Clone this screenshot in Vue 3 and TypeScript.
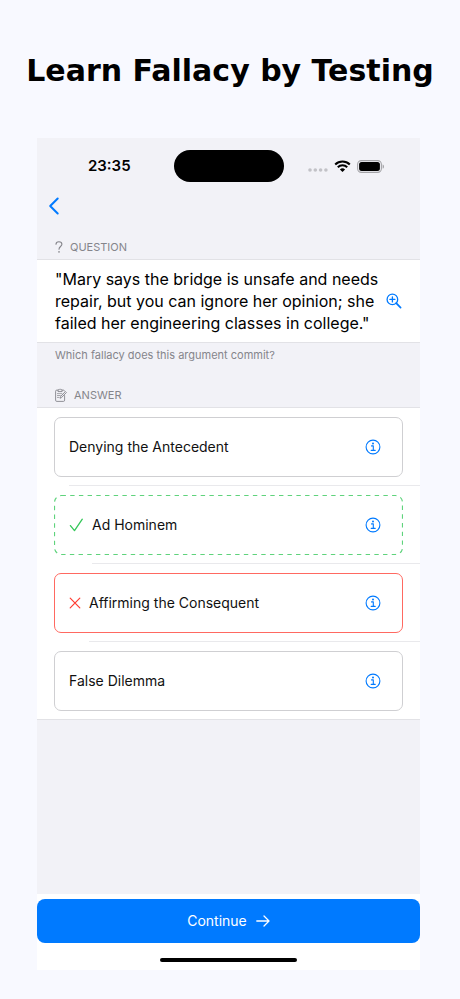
<script setup lang="ts">
import { ref } from 'vue'

type Verdict = 'none' | 'correct' | 'wrong'

interface Answer {
  label: string
  verdict: Verdict
}

const question =
  '"Mary says the bridge is unsafe and needs repair, but you can ignore her opinion; she failed her engineering classes in college."'

const answers = ref<Answer[]>([
  { label: 'Denying the Antecedent', verdict: 'none' },
  { label: 'Ad Hominem', verdict: 'correct' },
  { label: 'Affirming the Consequent', verdict: 'wrong' },
  { label: 'False Dilemma', verdict: 'none' },
])
</script>

<template>
  <main class="page">
    <h1 class="headline">Learn Fallacy by Testing</h1>

    <div class="phone">
      <header class="status">
        <time class="clock">23:35</time>
        <div class="island"></div>
        <div class="indicators">
          <svg class="dots" viewBox="0 0 20 4" aria-hidden="true">
            <circle cx="2" cy="2" r="1.8" />
            <circle cx="7.3" cy="2" r="1.8" />
            <circle cx="12.6" cy="2" r="1.8" />
            <circle cx="17.9" cy="2" r="1.8" />
          </svg>
          <svg class="wifi" viewBox="0 0 17 12" aria-hidden="true">
            <path d="M1.2 4.4a10.6 10.6 0 0 1 14.6 0M3.8 7.2a6.8 6.8 0 0 1 9.4 0" fill="none" stroke="#000" stroke-width="2.1" />
            <path d="M5.9 9.4a3.8 3.8 0 0 1 5.2 0L8.5 12z" />
          </svg>
          <svg class="battery" viewBox="0 0 28 13" aria-hidden="true">
            <rect x="0.6" y="0.6" width="23.8" height="11.8" rx="3.8" fill="none" stroke="#a4a4a8" stroke-width="1.1" />
            <rect x="2.1" y="2.1" width="20.8" height="8.8" rx="2.5" />
            <path d="M25.6 4.4c1.9.5 1.9 3.7 0 4.2z" fill="#a4a4a8" />
          </svg>
        </div>
      </header>

      <nav class="nav">
        <button class="icon-button" type="button" aria-label="Back">
          <svg class="back" viewBox="0 0 12 18" aria-hidden="true">
            <path d="M9.7 1.5 2.2 9l7.5 7.5" />
          </svg>
        </button>
      </nav>

      <section>
        <h2 class="section-title">
          <svg class="mark" viewBox="0 0 8 12" aria-hidden="true">
            <path d="M1 3.3C1 1.7 2.2.8 3.9.8s3 1 3 2.5c0 2.2-2.9 2.3-2.9 4.9" />
            <circle cx="4" cy="10.9" r="0.8" />
          </svg>
          <span>QUESTION</span>
        </h2>
        <div class="question">
          <p class="question-text">{{ question }}</p>
          <button class="icon-button" type="button" aria-label="Zoom in">
            <svg class="zoom" viewBox="0 0 16 16" aria-hidden="true">
              <circle cx="6.4" cy="6.4" r="5.3" />
              <path d="M10.2 10.2 14.6 14.6" stroke-width="1.7" />
              <path d="M6.4 3.9v5M3.9 6.4h5" />
            </svg>
          </button>
        </div>
        <p class="hint">Which fallacy does this argument commit?</p>
      </section>

      <section class="answer-section">
        <h2 class="section-title">
          <svg class="clipboard" viewBox="0 0 12 14" aria-hidden="true">
            <path d="M2.9 2.1H1.8A1.2 1.2 0 0 0 .6 3.3v8.9a1.2 1.2 0 0 0 1.2 1.2h6.6a1.2 1.2 0 0 0 1.2-1.2V7.6M7.3 2.1h1.1q.9 0 1.1.8" />
            <path d="M3 3.2V2.1q0-.4.4-.4h.8a.9.9 0 0 1 1.7 0h.8q.4 0 .4.4v1.1z" />
            <path d="M2.4 5.6h4.4M2.4 7.5h2.9M2.4 9.4h1.7" stroke-width="0.7" />
            <path d="m5.2 9.9.5-1.5 4.7-4.9 1 1-4.7 4.9z" />
          </svg>
          <span>ANSWER</span>
        </h2>
        <ul class="answers">
          <li v-for="answer in answers" :key="answer.label" class="row" :class="answer.verdict">
            <div class="card">
              <svg v-if="answer.verdict === 'correct'" class="outline" aria-hidden="true">
                <rect x="0.5" y="0.5" rx="7" />
              </svg>
              <svg v-if="answer.verdict === 'correct'" class="tick" viewBox="0 0 15 14" aria-hidden="true">
                <path d="m1.4 7.6 4.1 5L13.3 1.2" />
              </svg>
              <svg v-if="answer.verdict === 'wrong'" class="cross" viewBox="0 0 12 12" aria-hidden="true">
                <path d="m1.2 1.2 9.6 9.6M10.8 1.2 1.2 10.8" />
              </svg>
              <button class="choice" type="button">{{ answer.label }}</button>
              <button class="icon-button" type="button" :aria-label="'About ' + answer.label">
                <svg class="info" viewBox="0 0 16 16" aria-hidden="true">
                  <circle cx="8" cy="8" r="6.9" />
                  <path d="M6.5 6.9h1.8v4.3M6.2 11.4h4" />
                  <circle class="dot" cx="8" cy="4.5" r="1" />
                </svg>
              </button>
            </div>
          </li>
        </ul>
      </section>

      <footer class="bottom">
        <button class="continue" type="button">
          <span>Continue</span>
          <svg class="arrow" viewBox="0 0 14 12" aria-hidden="true">
            <path d="M.8 6h12M8 1l5 5-5 5" />
          </svg>
        </button>
        <div class="home-bar"></div>
      </footer>
    </div>
  </main>
</template>

<style>
body {
  margin: 0;
  background: #f8f9ff;
}
</style>

<style scoped>
.page {
  box-sizing: border-box;
  min-height: 100vh;
  padding: 47px 40px 29px 37px;
  display: flex;
  flex-direction: column;
  background: #f8f9ff;
  color: #000;
  font-family: Inter, "Liberation Sans", sans-serif;
}

.headline {
  margin: 0 -40px 43px -37px;
  font: 700 30px/48px "DejaVu Sans", sans-serif;
  text-align: center;
  white-space: nowrap;
}

.phone {
  flex: 1;
  display: flex;
  flex-direction: column;
  background: #f2f2f7;
}

.status {
  display: grid;
  grid-template-columns: 1fr 110px 1fr;
  align-items: center;
  padding-top: 12px;
}

.clock {
  justify-self: center;
  padding-left: 8px;
  font-size: 15px;
  line-height: 32px;
  font-weight: 600;
}

.island {
  height: 32px;
  border-radius: 16px;
  background: #000;
}

.indicators {
  display: flex;
  align-items: center;
  gap: 6px;
  padding-left: 24px;
}

svg {
  display: block;
  flex: none;
}

.dots {
  width: 20px;
  height: 4px;
  margin-top: 8px;
  fill: #c2c2c7;
}

.wifi {
  width: 17px;
  height: 12px;
}

.battery {
  width: 28px;
  height: 13px;
}

.nav {
  display: flex;
  align-items: center;
  height: 48px;
  padding-left: 11px;
}

.icon-button {
  display: flex;
  flex: none;
  padding: 0;
  border: 0;
  background: none;
  cursor: pointer;
}

.icon-button svg {
  fill: none;
  stroke: #007aff;
  stroke-linecap: round;
  stroke-linejoin: round;
}

.back {
  width: 12px;
  height: 18px;
  stroke-width: 2;
}

.section-title {
  display: flex;
  align-items: center;
  gap: 7px;
  margin: 0;
  padding: 9px 18px 4px;
  color: #85858b;
  font-size: 11px;
  line-height: 16px;
  font-weight: 400;
}

.section-title svg {
  fill: none;
  stroke: #85858b;
  stroke-linecap: round;
  stroke-linejoin: round;
}

.section-title .mark {
  width: 8px;
  height: 12px;
  stroke-width: 1.1;
}

.section-title .mark circle {
  fill: #85858b;
  stroke: none;
}

.section-title .clipboard {
  width: 12px;
  height: 14px;
  stroke-width: 0.9;
}

.question {
  display: flex;
  align-items: center;
  justify-content: space-between;
  padding: 8px 18px;
  border-top: 1px solid #e2e2e6;
  border-bottom: 1px solid #e2e2e6;
  background: #fff;
}

.question-text {
  margin: 0;
  font-size: 16px;
  line-height: 22px;
}

.zoom {
  width: 16px;
  height: 16px;
  stroke-width: 1.3;
}

.hint {
  margin: 0;
  padding: 4px 18px;
  color: #85858b;
  font-size: 11px;
  line-height: 16px;
}

.answer-section {
  padding-top: 11px;
}

.answers {
  margin: 0;
  padding: 0;
  list-style: none;
  background: #fff;
  border-top: 1px solid #e2e2e6;
}

.row {
  padding: 9px 17px 8px;
  border-bottom: 1px solid #e2e2e6;
  background: #fff;
}

.row:not(:last-child) {
  border-bottom: 0;
  padding-bottom: 9px;
  background: linear-gradient(#e9e9ec, #e9e9ec) 32px 100% / 100% 1px no-repeat;
}

.row.correct {
  background-position: 55px 100%;
}

.row.wrong {
  background-position: 52px 100%;
}

.card {
  position: relative;
  box-sizing: border-box;
  display: flex;
  align-items: center;
  height: 60px;
  padding: 0 21px 0 14px;
  border: 1px solid #cfcfd2;
  border-radius: 7px;
}

.correct .card {
  border-color: transparent;
}

.wrong .card {
  border-color: #ff6961;
}

.outline {
  position: absolute;
  inset: -1px;
  width: calc(100% + 2px);
  height: calc(100% + 2px);
  pointer-events: none;
}

.outline rect {
  width: calc(100% - 1px);
  height: calc(100% - 1px);
  fill: none;
  stroke: #5fd37c;
  stroke-width: 1.2;
  stroke-dasharray: 4.4 4.3;
}

.tick {
  width: 15px;
  height: 14px;
  margin-right: 8px;
  fill: none;
  stroke: #34c759;
  stroke-width: 1.3;
  stroke-linecap: round;
  stroke-linejoin: round;
}

.cross {
  width: 12px;
  height: 12px;
  margin-right: 8px;
  fill: none;
  stroke: #ff3b30;
  stroke-width: 1.2;
  stroke-linecap: round;
}

.choice {
  flex: 1;
  padding: 0;
  border: 0;
  background: none;
  color: #111;
  font: inherit;
  font-size: 14px;
  line-height: 20px;
  text-align: left;
  cursor: pointer;
}

.info {
  width: 16px;
  height: 16px;
  stroke-width: 1.1;
}

.icon-button .info .dot {
  fill: #007aff;
  stroke: none;
}

.bottom {
  margin-top: auto;
  padding: 5px 0 8px;
  background: #fff;
}

.continue {
  display: flex;
  align-items: center;
  justify-content: center;
  gap: 9px;
  width: 100%;
  padding: 12px;
  border: 0;
  border-radius: 8px;
  background: #007aff;
  color: #fff;
  font: inherit;
  font-size: 14px;
  line-height: 20px;
  cursor: pointer;
}

.arrow {
  width: 14px;
  height: 12px;
  fill: none;
  stroke: #fff;
  stroke-width: 1.3;
  stroke-linecap: round;
  stroke-linejoin: round;
}

.home-bar {
  width: 36%;
  height: 4px;
  margin: 15px auto 0;
  border-radius: 2px;
  background: #000;
}
</style>
